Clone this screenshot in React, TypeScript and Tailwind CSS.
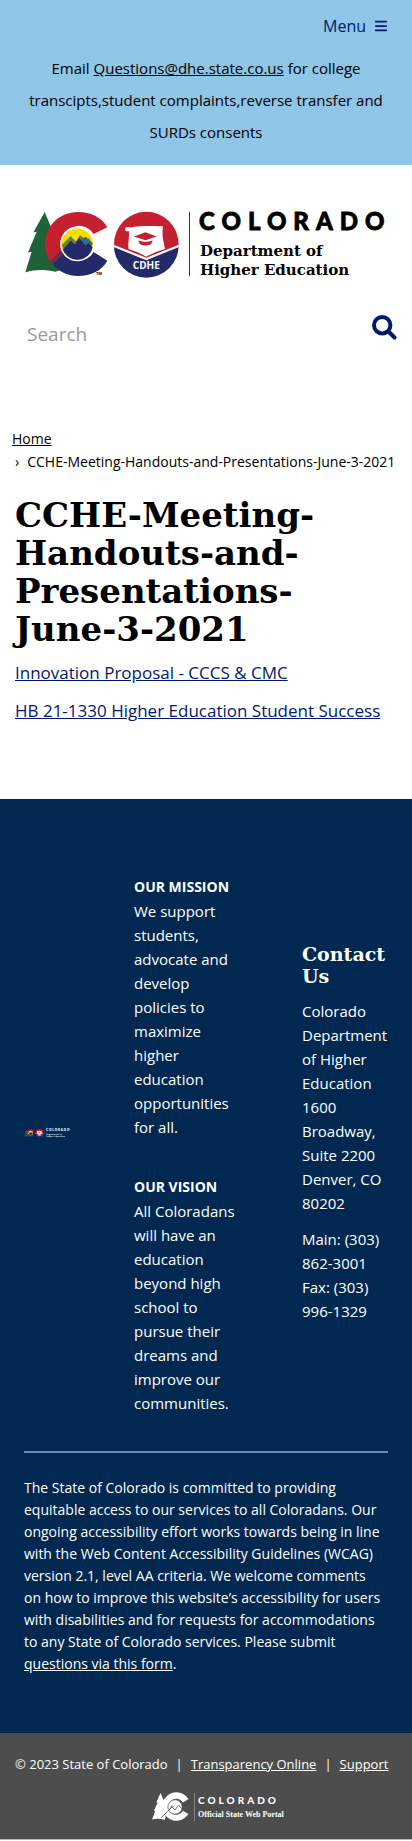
import { FaBars } from "react-icons/fa6";

function DepartmentLogo({ inverse = false }: { inverse?: boolean }) {
  const ink = inverse ? "#e5f2ff" : "#000000";
  return (
    <svg viewBox="0 0 364 68" className="block w-full overflow-visible" role="img" aria-label="Colorado Department of Higher Education">
      {/* Pine tree */}
      <path d="M20.7 1 9.3 21.5l3.4-.8L4 41.6l3.6-.8L1.3 61.4c10-3 19-3 30-.6l12-4L37 8l-8 13Z" fill="#1f6238" />
      {/* Letter C */}
      <path d="M83.3 16.3C78 6.500 67 1 54 1 35 1 21 15.500 21 33c0 8 3 15 7.500 20.200L40 41.800A17.300 17.300 0 0 1 69.600 23Z" fill="#c4202f" />
      <path d="M28.500 53.200 40 41.800A17.300 17.300 0 0 0 69.600 41l13.700 8.700C78 59.500 67 65 54 65c-10 0-19-4.500-25.500-11.800Z" fill="#232a6a" />
      <path d="M26 50.500 37.500 38.500l2.800 4L29 53.500Z" fill="#5c2a5c" opacity=".7" />
      <circle cx="53.3" cy="33" r="17.2" fill="#fff" />
      <circle cx="53.3" cy="33" r="15.6" fill="#fedd00" />
      <path d="M37.800 34 46.500 25l5.500 5.500L56 24l6 5 2.500-2 3.800 5A15.600 15.600 0 0 1 37.800 34Z" fill="#6f8136" />
      <path d="m57 29 4.500-3.500 7 7-3 7-9-6Z" fill="#2b6c86" />
      <path d="M38.800 38.500 47 29.500l3.500 4 4.500-6.500 6.500 7.500 3-2.500 4.200 4.500A15.600 15.600 0 0 1 38.800 38.500Z" fill="#232a6a" />
      <text x="72" y="63.500" fontSize="4" className="font-['Open_Sans'] font-bold" fill={ink}>TM</text>
      {/* Department seal */}
      <circle cx="122.300" cy="33" r="32.300" fill="#c4202f" />
      <path d="M90 34.500 122.300 49l32.300-14.500A32.300 32.300 0 0 1 90 34.500Z" fill="#232a6a" />
      <path d="m90 35 32.300 13L154.600 35" fill="none" stroke="#fff" strokeWidth="2.200" />
      <path d="M106 16.500c11-2 22-1.500 33-1.200-1.500 8 .5 15 2 22.700-7 2-13 4.500-18.800 7.800C117 42.500 111 40 104.600 38c-1-6 1-11 .2-18-2.600 1.200-4.300-1-3.600-2.500.8-1.500 3-1.200 4.800-1Z" fill="#fff" />
      <path d="m110 25.500 11.500-4.200L132.500 25.500 121.500 29.300Z" fill="#c4202f" />
      <path d="M114.500 29.500c5 1.800 9 1.800 14 0-.5 4.200-3.500 5-7 5s-6.500-.8-7-5Z" fill="#c4202f" />
      <text x="122.300" y="58" textAnchor="middle" fontSize="10" className="font-['Open_Sans'] font-bold" fill="#fff">CDHE</text>
      {/* Wordmark */}
      <path d="M165.500 1v64" stroke={ink} strokeWidth="1" opacity=".8" />
      <text x="175" y="18.500" fontSize="24" stroke={ink} strokeWidth=".8" className="font-['Lato'] tracking-[7px] font-black" fill={ink}>COLORADO</text>
      <text x="176" y="45" fontSize="15" className="font-['DejaVu_Serif'] font-bold" fill={ink}>Department of</text>
      <text x="176" y="64" fontSize="15" className="font-['DejaVu_Serif'] font-bold" fill={ink}>Higher Education</text>
    </svg>
  );
}

function PortalLogo() {
  return (
    <svg viewBox="0 0 136 30" className="block w-[136px] overflow-visible" role="img" aria-label="Colorado Official State Web Portal">
      <path d="M8.500 1 4.300 10.500l1.500-.3L1.800 19l1.500-.3L0 27.500c5-1.200 9-.8 13 .5L16 8l-4 1Z" fill="#fff" />
      <path d="M36.500 7A14.200 14.200 0 1 0 36.500 22l-5.500-3a8 8 0 1 1 0-8.500Z" fill="#fff" />
      <circle cx="23" cy="15" r="7.200" fill="#fff" stroke="#666" strokeWidth=".8" />
      <path d="m9 26 11-11 3 3 3.500-5 5.500 6M17 18.500l3-5 2 2" fill="none" stroke="#666" strokeWidth=".9" />
      <path d="M42.500 1v28" stroke="#999" strokeWidth=".7" />
      <text x="46" y="12" fontSize="10" className="font-['Lato'] tracking-[3px] font-black" fill="#fff">COLORADO</text>
      <text x="46" y="25" fontSize="8" className="font-['Liberation_Serif'] font-bold" fill="#fff">Official State Web Portal</text>
    </svg>
  );
}

function SearchIcon() {
  return (
    <svg viewBox="0 0 25 25" className="size-[25px]" fill="none" stroke="currentColor" strokeWidth="4" strokeLinecap="round" aria-hidden="true">
      <circle cx="10.200" cy="10.200" r="8.200" />
      <path d="m16.500 16.500 6 6" />
    </svg>
  );
}

export default function App() {
  return (
    <div className="bg-[#8fc5e6] pb-px font-['Open_Sans',sans-serif] text-black">
      <header>
        <div className="px-6 pt-3 pb-[17px]">
          <div className="flex justify-end">
            <button type="button" className="flex items-center gap-2 text-base leading-7 text-[#001970]">
              Menu <FaBars className="size-3.5" />
            </button>
          </div>
          <p className="mt-3 text-center text-[15px] leading-8">
            Email{" "}
            <a href="mailto:Questions@dhe.state.co.us" className="underline">Questions@dhe.state.co.us</a>{" "}
            for college transcipts,student complaints,reverse transfer and SURDs consents
          </p>
        </div>
        <div className="bg-white px-6 pt-[46px]">
          <a href="#home"><DepartmentLogo /></a>
          <form className="flex items-start justify-between pt-9 pb-[74px]" onSubmit={(e) => e.preventDefault()}>
            <input
              type="search"
              aria-label="Search"
              placeholder="Search"
              className="h-[38px] min-w-0 flex-1 px-[3px] text-[19px] outline-none placeholder:text-[#999999]"
            />
            <button type="submit" aria-label="Submit search" className="mr-[-9px] text-[#001970]">
              <SearchIcon />
            </button>
          </form>
        </div>
      </header>

      <main className="bg-white pb-[76px]">
        <nav aria-label="Breadcrumb" className="px-3 text-sm leading-[23px]">
          <ol>
            <li><a href="#home" className="underline">Home</a></li>
            <li className="flex gap-2 whitespace-nowrap pl-[3px]"><span aria-hidden="true">›</span>CCHE-Meeting-Handouts-and-Presentations-June-3-2021</li>
          </ol>
        </nav>
        <div className="px-[15px] pt-[23px]">
          <h1 className="pr-8 font-['DejaVu_Serif',serif] text-[34px] leading-[38px] font-bold">
            CCHE-Meeting-Handouts-and-Presentations-June-3-2021
          </h1>
          <div className="mt-[13px] flex flex-col gap-3.5 text-[17px] leading-6 text-[#001970]">
            <p><a href="#innovation" className="underline">Innovation Proposal - CCCS &amp; CMC</a></p>
            <p><a href="#hb-21-1330" className="underline">HB 21-1330 Higher Education Student Success</a></p>
          </div>
        </div>
      </main>

      <footer className="text-white">
        <div className="bg-[#002851] px-6 pt-[52px] pb-[58px]">
          <div className="grid grid-cols-[46fr_104fr_86fr] items-center gap-16 text-[15px] leading-6">
            <DepartmentLogo inverse />
            <div className="flex flex-col gap-9 pt-6">
              <section>
                <h2 className="text-sm leading-6 font-bold whitespace-nowrap">OUR MISSION</h2>
                <p>We support students, advocate and develop policies to maximize higher education opportunities for all.</p>
              </section>
              <section>
                <h2 className="text-sm leading-6 font-bold">OUR VISION</h2>
                <p>All Coloradans will have an education beyond high school to pursue their dreams and improve our communities.</p>
              </section>
            </div>
            <section>
              <h2 className="mb-3 font-['DejaVu_Serif',serif] text-[19px] leading-[22px] font-bold">Contact Us</h2>
              <p>Colorado Department of Higher Education<br />1600 Broadway, Suite 2200<br />Denver, CO 80202</p>
              <p className="mt-3">Main: (303) 862-3001<br />Fax: (303) 996-1329</p>
            </section>
          </div>
          <hr className="mt-9 mb-6 border-t-2 border-[#6389b4]" />
          <p className="pr-1 text-sm leading-[22px]">
            The State of Colorado is committed to providing equitable access to our services to all Coloradans. Our
            ongoing accessibility effort works towards being in line with the Web Content Accessibility Guidelines
            (WCAG) version 2.1, level AA criteria. We welcome comments on how to improve this website’s accessibility
            for users with disabilities and for requests for accommodations to any State of Colorado services. Please
            submit <a href="#accessibility-form" className="underline">questions via this form</a>.
          </p>
        </div>
        <div className="bg-[#4d4d4d] px-[15px] pt-[19px] pb-[17px]">
          <p className="flex gap-2 text-[13px] leading-6 whitespace-nowrap">
            © 2023 State of Colorado <span>|</span>
            <a href="#transparency" className="underline">Transparency Online</a> <span>|</span>
            <a href="#support" className="underline">Support</a>
          </p>
          <div className="mt-4 flex justify-center pl-7">
            <a href="#colorado"><PortalLogo /></a>
          </div>
        </div>
      </footer>
    </div>
  );
}
